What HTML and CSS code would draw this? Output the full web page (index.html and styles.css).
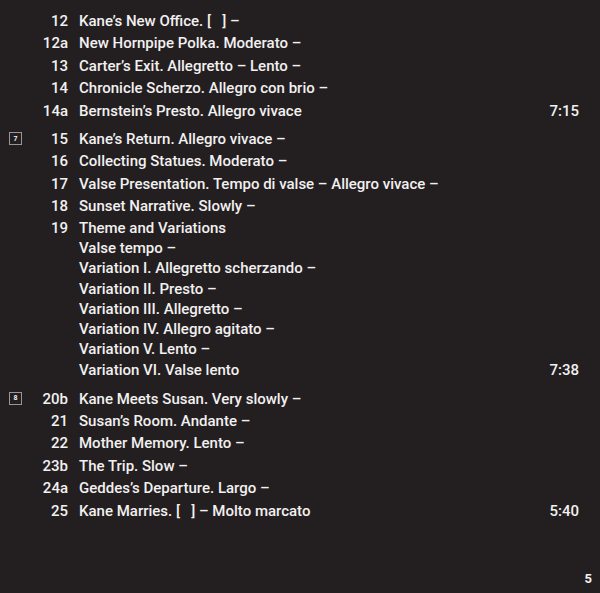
FILE: index.html
```html
<!DOCTYPE html>
<html lang="en">
<head>
    <meta charset="UTF-8">
    <title>Citizen Kane - Track List</title>
    <link rel="stylesheet" href="styles.css">
</head>
<body>
    <div class="page">
        <div class="section">
            <div class="marker-col"></div>
            <div class="tracks">
                <div class="track"><span class="num">12</span><span class="title">Kane’s New Office. [&nbsp;&nbsp;&nbsp;] –</span><span class="time"></span></div>
                <div class="track"><span class="num">12a</span><span class="title">New Hornpipe Polka. Moderato –</span><span class="time"></span></div>
                <div class="track"><span class="num">13</span><span class="title">Carter’s Exit. Allegretto – Lento –</span><span class="time"></span></div>
                <div class="track"><span class="num">14</span><span class="title">Chronicle Scherzo. Allegro con brio –</span><span class="time"></span></div>
                <div class="track"><span class="num">14a</span><span class="title">Bernstein’s Presto. Allegro vivace</span><span class="time">7:15</span></div>
            </div>
        </div>

        <div class="section">
            <div class="marker-col"><span class="marker">7</span></div>
            <div class="tracks">
                <div class="track"><span class="num">15</span><span class="title">Kane’s Return. Allegro vivace –</span><span class="time"></span></div>
                <div class="track"><span class="num">16</span><span class="title">Collecting Statues. Moderato –</span><span class="time"></span></div>
                <div class="track"><span class="num">17</span><span class="title">Valse Presentation. Tempo di valse – Allegro vivace –</span><span class="time"></span></div>
                <div class="track"><span class="num">18</span><span class="title">Sunset Narrative. Slowly –</span><span class="time"></span></div>
                <div class="track sub"><span class="num">19</span><span class="title">Theme and Variations</span><span class="time"></span></div>
                <div class="track sub"><span class="num"></span><span class="title">Valse tempo –</span><span class="time"></span></div>
                <div class="track sub"><span class="num"></span><span class="title">Variation I. Allegretto scherzando –</span><span class="time"></span></div>
                <div class="track sub"><span class="num"></span><span class="title">Variation II. Presto –</span><span class="time"></span></div>
                <div class="track sub"><span class="num"></span><span class="title">Variation III. Allegretto –</span><span class="time"></span></div>
                <div class="track sub"><span class="num"></span><span class="title">Variation IV. Allegro agitato –</span><span class="time"></span></div>
                <div class="track sub"><span class="num"></span><span class="title">Variation V. Lento –</span><span class="time"></span></div>
                <div class="track sub"><span class="num"></span><span class="title">Variation VI. Valse lento</span><span class="time">7:38</span></div>
            </div>
        </div>

        <div class="section">
            <div class="marker-col"><span class="marker">8</span></div>
            <div class="tracks">
                <div class="track"><span class="num">20b</span><span class="title">Kane Meets Susan. Very slowly –</span><span class="time"></span></div>
                <div class="track"><span class="num">21</span><span class="title">Susan’s Room. Andante –</span><span class="time"></span></div>
                <div class="track"><span class="num">22</span><span class="title">Mother Memory. Lento –</span><span class="time"></span></div>
                <div class="track"><span class="num">23b</span><span class="title">The Trip. Slow –</span><span class="time"></span></div>
                <div class="track"><span class="num">24a</span><span class="title">Geddes’s Departure. Largo –</span><span class="time"></span></div>
                <div class="track"><span class="num">25</span><span class="title">Kane Marries. [&nbsp;&nbsp;&nbsp;] – Molto marcato</span><span class="time">5:40</span></div>
            </div>
        </div>

        <div class="page-num">5</div>
    </div>
</body>
</html>
```
FILE: styles.css
```css
:root {
    --background: #231f20;
    --text: #f2f0f0;
    --muted: #9a9697;
}

html, body {
    margin: 0;
    padding: 0;
    background: var(--background);
}

body {
    font-family: Roboto, 'Liberation Sans', sans-serif;
    font-weight: 500;
    font-size: 15px;
    color: var(--text);
}

.page {
    height: 593px;
    box-sizing: border-box;
    padding: 10px 21px 0 9px;
    display: flex;
    flex-direction: column;
    position: relative;
}

.section {
    display: flex;
    margin-bottom: 6px;
}

.section:nth-child(2) {
    margin-bottom: 7.6px;
}

.marker-col {
    width: 21px;
    flex-shrink: 0;
    padding-top: 4px;
}

.marker {
    display: flex;
    align-items: center;
    justify-content: center;
    width: 11px;
    height: 11px;
    border: 1px solid var(--muted);
    font-size: 7px;
    font-weight: 700;
    color: var(--text);
}

.tracks {
    flex: 1;
}

.track {
    display: grid;
    grid-template-columns: 38px 1fr auto;
    column-gap: 11px;
    line-height: 22.4px;
}

.track.sub {
    line-height: 20.3px;
}

.num {
    text-align: right;
}

.time {
    text-align: right;
}

.page-num {
    position: absolute;
    right: 8px;
    bottom: 7px;
    font-size: 13px;
    font-weight: 700;
}
```
